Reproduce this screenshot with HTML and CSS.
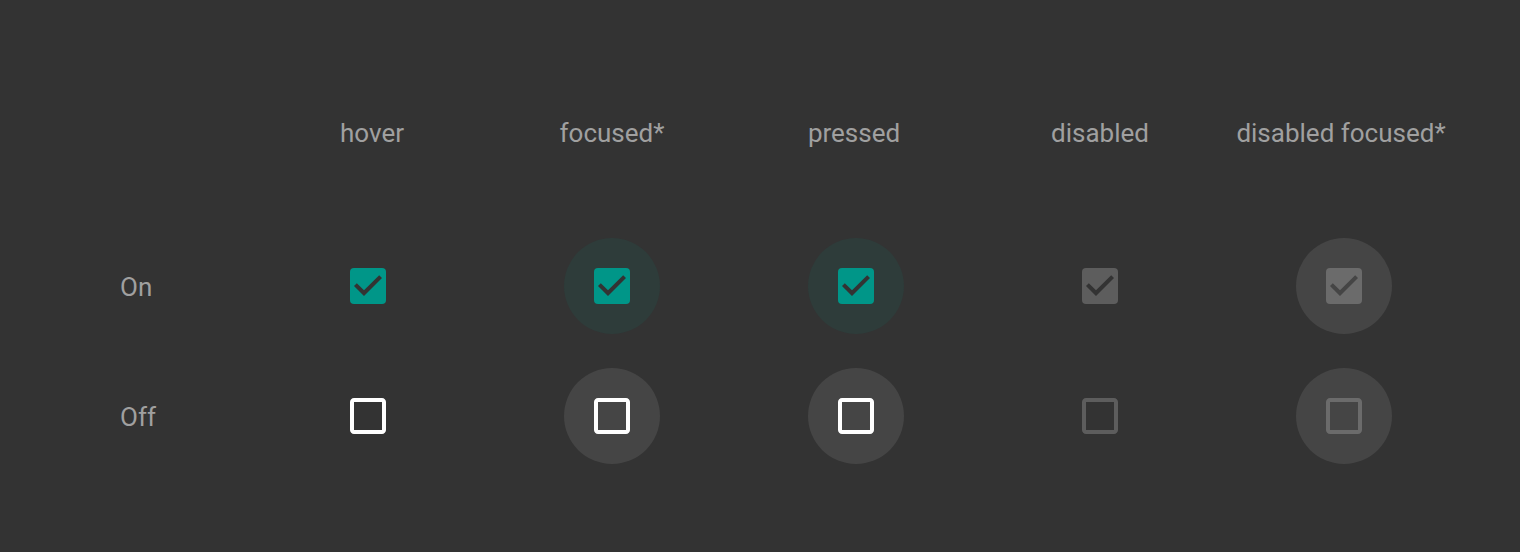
FILE: index.html
```html
<!DOCTYPE html>
<html>
<head>
<meta charset="utf-8">
<link rel="stylesheet" href="styles.css">
</head>
<body>
<div class="grid">
  <div class="head"></div>
  <div class="head h-hover">hover</div>
  <div class="head">focused*</div>
  <div class="head h-pressed">pressed</div>
  <div class="head">disabled</div>
  <div class="head h-disf">disabled focused*</div>

  <div class="label">On</div>
  <div class="cell"><svg class="cb on" viewBox="3 3 18 18"><rect class="box" x="3" y="3" width="18" height="18" rx="2"/><path class="chk" d="M10 17l-5-5 1.41-1.41L10 14.170l7.59-7.59L19 8l-9 9z"/></svg></div>
  <div class="cell"><div class="halo teal"><svg class="cb on" viewBox="3 3 18 18"><rect class="box" x="3" y="3" width="18" height="18" rx="2"/><path class="chk" d="M10 17l-5-5 1.41-1.41L10 14.17l7.59-7.59L19 8l-9 9z"/></svg></div></div>
  <div class="cell"><div class="halo teal"><svg class="cb on" viewBox="3 3 18 18"><rect class="box" x="3" y="3" width="18" height="18" rx="2"/><path class="chk" d="M10 17l-5-5 1.41-1.41L10 14.17l7.59-7.59L19 8l-9 9z"/></svg></div></div>
  <div class="cell"><svg class="cb dis" viewBox="3 3 18 18"><rect class="box" x="3" y="3" width="18" height="18" rx="2"/><path class="chk" d="M10 17l-5-5 1.41-1.41L10 14.17l7.59-7.59L19 8l-9 9z"/></svg></div>
  <div class="cell"><div class="halo grey"><svg class="cb disf" viewBox="3 3 18 18"><rect class="box" x="3" y="3" width="18" height="18" rx="2"/><path class="chk" d="M10 17l-5-5 1.41-1.41L10 14.17l7.59-7.59L19 8l-9 9z"/></svg></div></div>

  <div class="label">Off</div>
  <div class="cell"><svg class="cb off" viewBox="3 3 18 18"><path class="box" d="M19 5v14H5V5h14m0-2H5c-1.1 0-2 .9-2 2v14c0 1.1.9 2 2 2h14c1.1 0 2-.9 2-2V5c0-1.1-.9-2-2-2z"/></svg></div>
  <div class="cell"><div class="halo grey"><svg class="cb off" viewBox="3 3 18 18"><path class="box" d="M19 5v14H5V5h14m0-2H5c-1.1 0-2 .9-2 2v14c0 1.1.9 2 2 2h14c1.1 0 2-.9 2-2V5c0-1.1-.9-2-2-2z"/></svg></div></div>
  <div class="cell"><div class="halo grey"><svg class="cb off" viewBox="3 3 18 18"><path class="box" d="M19 5v14H5V5h14m0-2H5c-1.1 0-2 .9-2 2v14c0 1.1.9 2 2 2h14c1.1 0 2-.9 2-2V5c0-1.1-.9-2-2-2z"/></svg></div></div>
  <div class="cell"><svg class="cb offdis" viewBox="3 3 18 18"><path class="box" d="M19 5v14H5V5h14m0-2H5c-1.1 0-2 .9-2 2v14c0 1.1.9 2 2 2h14c1.1 0 2-.9 2-2V5c0-1.1-.9-2-2-2z"/></svg></div>
  <div class="cell"><div class="halo grey"><svg class="cb offdisf" viewBox="3 3 18 18"><path class="box" d="M19 5v14H5V5h14m0-2H5c-1.1 0-2 .9-2 2v14c0 1.1.9 2 2 2h14c1.1 0 2-.9 2-2V5c0-1.1-.9-2-2-2z"/></svg></div></div>
</div>
</body>
</html>
```

FILE: styles.css
```css
html, body {
  margin: 0;
  padding: 0;
  background: #333333;
  height: 100%;
}
body {
  font-family: Roboto, "Liberation Sans", sans-serif;
  color: #a0a0a0;
}
.grid {
  display: grid;
  grid-template-columns: 126px repeat(5, 244px);
  grid-template-rows: 85px 96px 96px;
  row-gap: 34px;
  padding: 119px 0 0 120px;
}
.head {
  font-size: 26px;
  line-height: 28px;
  text-align: center;
  align-self: start;
}
.h-hover { padding-left: 8px; }
.h-pressed { padding-right: 4px; }
.h-disf { padding-right: 6px; }
.label {
  font-size: 26px;
  line-height: 28px;
  align-self: center;
  padding-top: 2px;
}
.cell {
  display: flex;
  align-items: center;
  justify-content: center;
}
.halo {
  width: 96px;
  height: 96px;
  border-radius: 50%;
  display: flex;
  align-items: center;
  justify-content: center;
}
.halo.teal { background: #2e3c3a; }
.halo.grey { background: #454545; }
.cb {
  width: 36px;
  height: 36px;
  display: block;
}
.cb.on .box { fill: #009688; }
.cb.on .chk { fill: #333333; }
.cb.dis .box { fill: #5d5d5d; }
.cb.dis .chk { fill: #333333; }
.cb.disf .box { fill: #6b6b6b; }
.cb.disf .chk { fill: #454545; }
.cb.off .box { fill: #ffffff; }
.cb.offdis .box { fill: #5d5d5d; }
.cb.offdisf .box { fill: #6b6b6b; }
```
